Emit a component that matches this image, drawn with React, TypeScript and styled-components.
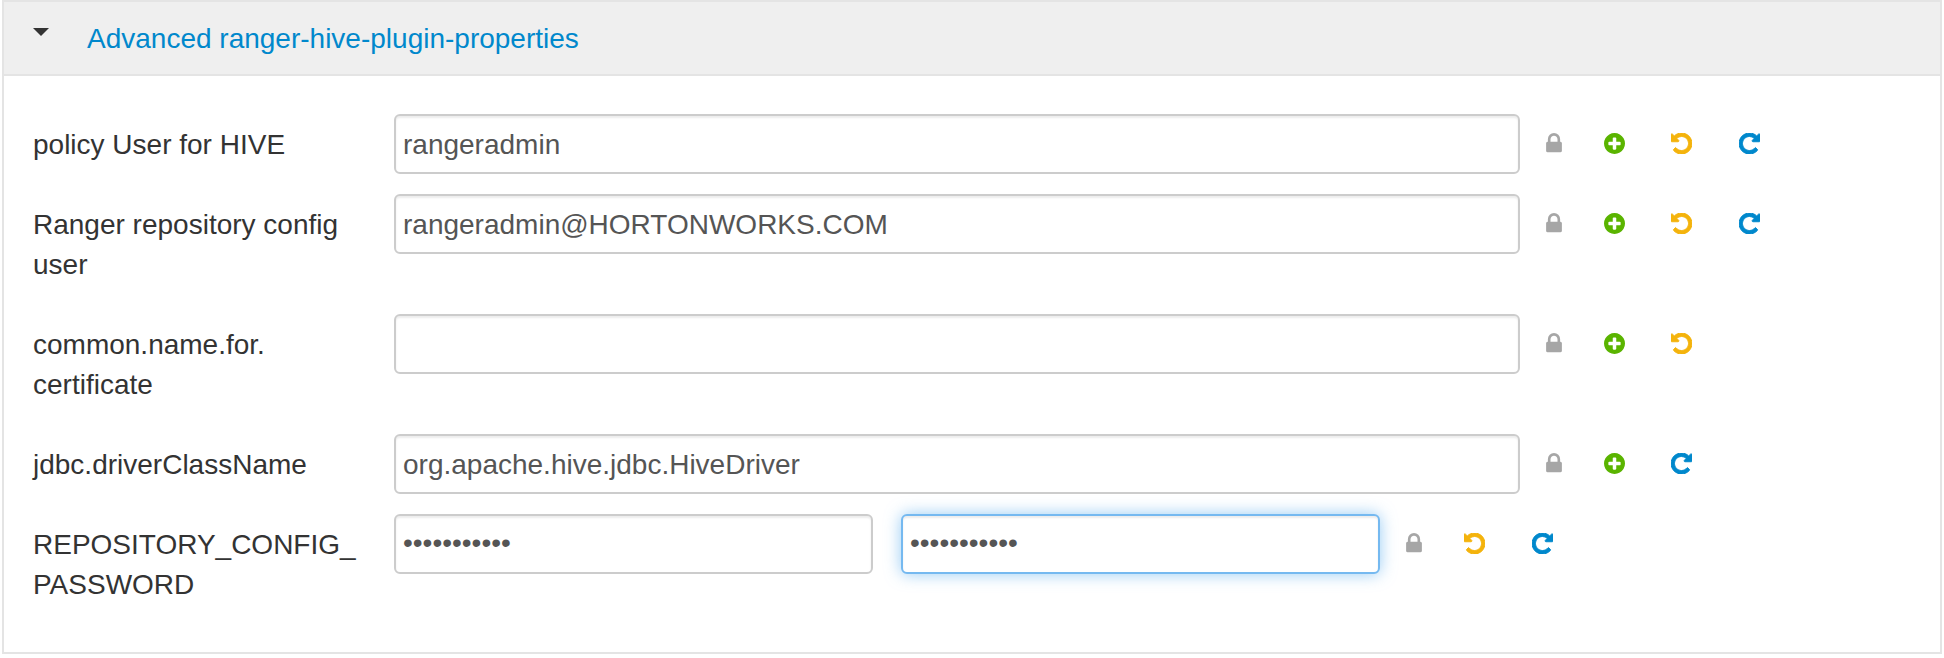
import React, { useState } from 'react';
import styled, { createGlobalStyle, css } from 'styled-components';

const GlobalStyle = createGlobalStyle`
  *, *::before, *::after { box-sizing: border-box; }
  body {
    margin: 0;
    background: #fff;
    color: #333;
    font-family: "Liberation Sans", Arial, sans-serif;
    font-size: 28px;
    line-height: 40px;
  }
`;

const Panel = styled.section`
  margin: 0 2px 4px;
  border: 2px solid #e4e4e4;
`;

const PanelHeader = styled.header<{ $open: boolean }>`
  display: flex;
  align-items: flex-start;
  padding: 17px 29px 15px;
  background: #efefef;
  border-bottom: ${(p) => (p.$open ? '2px solid #e4e4e4' : '0')};
`;

const CaretButton = styled.button`
  display: flex;
  width: 54px;
  height: 28px;
  margin: 0;
  padding: 9px 0 0;
  border: 0;
  background: none;
  cursor: pointer;
`;

const Caret = styled.span<{ $open: boolean }>`
  width: 0;
  height: 0;
  border: 8px solid transparent;
  border-top-color: #333;
  border-bottom-width: 0;
  transform: rotate(${(p) => (p.$open ? '0deg' : '-90deg')});
`;

const PanelTitle = styled.h2`
  margin: 0;
  font-size: 28px;
  font-weight: 400;
`;

const TitleLink = styled.a`
  color: #0088cc;
  text-decoration: none;
`;

const PanelBody = styled.form`
  padding: 38px 28px 18px 29px;
`;

const Row = styled.div`
  display: flex;
  align-items: flex-start;
  margin-bottom: 20px;
`;

const Label = styled.label`
  flex: 0 0 361px;
  padding: 11px 36px 9px 0;
`;

const Fields = styled.div`
  display: grid;
  grid-auto-flow: column;
  grid-auto-columns: minmax(0, 1fr);
  flex: 1 1 0;
  gap: 28px;
  min-width: 0;
`;

const Input = styled.input<{ $active: boolean }>`
  width: 100%;
  height: 60px;
  padding: 9px 7px 7px;
  border: 2px solid #ccc;
  border-radius: 6px;
  background: #fff;
  box-shadow: inset 0 2px 2px rgba(0, 0, 0, 0.075);
  color: #555;
  font: inherit;
  outline: 0;
  &[type='password'] {
    padding: 7px 7px 9px;
  }
  ${(p) =>
    p.$active &&
    css`
      border-color: #75b9f0;
      box-shadow: inset 0 2px 2px rgba(0, 0, 0, 0.075), 0 0 16px rgba(82, 168, 236, 0.6);
    `}
`;

const Actions = styled.div<{ $wide: boolean }>`
  display: flex;
  flex: 0 0 ${(p) => (p.$wide ? 532 : 392)}px;
  padding-left: 26px;
`;

type IconName = 'lock' | 'add' | 'undo' | 'refresh';

const colors: Record<IconName, string> = {
  lock: '#a6a6a6',
  add: '#5ab400',
  undo: '#f4b30c',
  refresh: '#0088cc',
};

const widths: Record<IconName, number> = { lock: 58, add: 67, undo: 68, refresh: 68 };

const ActionButton = styled.button<{ $icon: IconName }>`
  display: flex;
  align-items: center;
  width: ${(p) => widths[p.$icon]}px;
  height: 58px;
  margin: 0;
  padding: 0;
  border: 0;
  background: none;
  color: ${(p) => colors[p.$icon]};
  cursor: pointer;
`;

const LOCK =
  'M640 768h512v-192q0-106-75-181t-181-75-181 75-75 181v192zm832 96v576q0 40-28 68t-68 28h-960q-40 0-68-28t-28-68v-576q0-40 28-68t68-28h32v-192q0-184 132-316t316-132 316 132 132 316v192h32q40 0 68 28t28 68z';
const PLUS =
  'M1344 960v-128q0-26-19-45t-45-19h-256v-256q0-26-19-45t-45-19h-128q-26 0-45 19t-19 45v256h-256q-26 0-45 19t-19 45v128q0 26 19 45t45 19h256v256q0 26 19 45t45 19h128q26 0 45-19t19-45v-256h256q26 0 45-19t19-45zm320-64q0 209-103 385.5t-279.5 279.5-385.5 103-385.5-103-279.5-279.5-103-385.5 103-385.5 279.5-279.5 385.5-103 385.5 103 279.5 279.5 103 385.5z';
const REPEAT =
  'M1664 256v448q0 26-19 45t-45 19h-448q-42 0-59-40-17-39 14-69l138-138q-148-137-349-137-104 0-198.5 40.5t-163.5 109.5-109.5 163.5-40.5 198.5 40.5 198.5 109.5 163.5 163.5 109.5 198.5 40.5q119 0 225-52t179-147q7-10 23-12 15 0 25 9l137 138q9 8 9.5 20.5t-7.5 22.5q-109 132-264 204.5t-327 72.5q-156 0-298-61t-245-164-164-245-61-298 61-298 164-245 245-164 298-61q147 0 284.5 55.5t244.5 156.5l130-129q29-31 70-14 39 17 39 59z';

function Icon({ name }: { name: IconName }) {
  if (name === 'lock') {
    return (
      <svg width="16" height="21" viewBox="320 128 1152 1536" fill="currentColor" aria-hidden="true">
        <path d={LOCK} />
      </svg>
    );
  }
  const stroke = name === 'add' ? 0 : 70;
  return (
    <svg width="21" height="21" viewBox="128 128 1536 1536" fill="currentColor" aria-hidden="true">
      <path
        d={name === 'add' ? PLUS : REPEAT}
        stroke="currentColor"
        strokeWidth={stroke}
        strokeLinejoin="round"
        transform={name === 'undo' ? 'matrix(-1 0 0 1 1792 0)' : undefined}
      />
    </svg>
  );
}

const actionTitles: Record<IconName, string> = {
  lock: 'Final',
  add: 'Override',
  undo: 'Undo',
  refresh: 'Set recommended',
};

interface Property {
  id: string;
  label: React.ReactNode;
  value: string;
  secret?: boolean;
  actions: IconName[];
}

const properties: Property[] = [
  { id: 'policy-user', label: 'policy User for HIVE', value: 'rangeradmin', actions: ['lock', 'add', 'undo', 'refresh'] },
  {
    id: 'repo-user',
    label: 'Ranger repository config user',
    value: 'rangeradmin@HORTONWORKS.COM',
    actions: ['lock', 'add', 'undo', 'refresh'],
  },
  { id: 'common-name', label: <>common.name.for.<wbr />certificate</>, value: '', actions: ['lock', 'add', 'undo'] },
  {
    id: 'jdbc-driver',
    label: 'jdbc.driverClassName',
    value: 'org.apache.hive.jdbc.HiveDriver',
    actions: ['lock', 'add', 'refresh'],
  },
  {
    id: 'repo-password',
    label: <>REPOSITORY_CONFIG_<wbr />PASSWORD</>,
    value: 'rangeradmin',
    secret: true,
    actions: ['lock', 'undo', 'refresh'],
  },
];

export default function App() {
  const [open, setOpen] = useState(true);
  const [active, setActive] = useState('repo-password-confirm');

  const field = (id: string, property: Property, ariaLabel?: string) => (
    <Input
      key={id}
      id={id}
      type={property.secret ? 'password' : 'text'}
      defaultValue={property.value}
      autoComplete="off"
      spellCheck={false}
      aria-label={ariaLabel}
      $active={active === id}
      onFocus={() => setActive(id)}
      onBlur={() => setActive('')}
    />
  );

  return (
    <>
      <GlobalStyle />
      <Panel>
        <PanelHeader $open={open}>
          <CaretButton type="button" aria-label="Toggle section" aria-expanded={open} onClick={() => setOpen(!open)}>
            <Caret $open={open} />
          </CaretButton>
          <PanelTitle>
            <TitleLink href="#properties">Advanced ranger-hive-plugin-properties</TitleLink>
          </PanelTitle>
        </PanelHeader>
        {open && (
          <PanelBody id="properties" onSubmit={(e) => e.preventDefault()}>
            {properties.map((p) => (
              <Row key={p.id}>
                <Label htmlFor={p.id}>{p.label}</Label>
                <Fields>
                  {field(p.id, p)}
                  {p.secret && field(`${p.id}-confirm`, p, 'Confirm password')}
                </Fields>
                <Actions $wide={!!p.secret}>
                  {p.actions.map((name) => (
                    <ActionButton key={name} type="button" $icon={name} aria-label={actionTitles[name]}>
                      <Icon name={name} />
                    </ActionButton>
                  ))}
                </Actions>
              </Row>
            ))}
          </PanelBody>
        )}
      </Panel>
    </>
  );
}
